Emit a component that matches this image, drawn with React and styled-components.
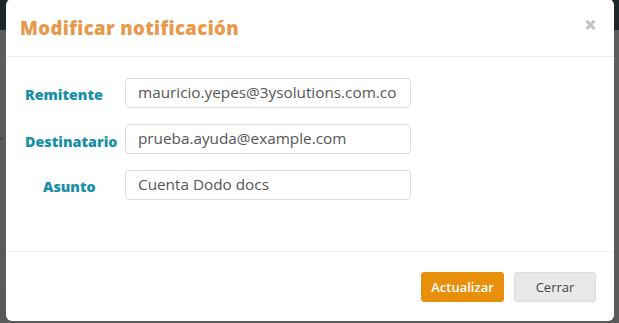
import React from "react";
import styled, { createGlobalStyle } from "styled-components";

const Global = createGlobalStyle`
  html, body { margin: 0; padding: 0; }
  body { font-family: "Open Sans", "Noto Sans", sans-serif; background: #5c5c5c; }
  * { box-sizing: border-box; }
`;

const Backdrop = styled.div`
  position: relative;
  width: 619px;
  height: 323px;
  overflow: hidden;
  background: linear-gradient(to bottom, #1c2629 0, #1c2629 30px, #5d5d5d 30px, #5a5a5a 100%);
`;

const BackText = styled.span`
  position: absolute;
  left: -4px;
  top: 130px;
  font-size: 15px;
  color: #2a2a2a;
`;

const Modal = styled.div`
  position: absolute;
  left: 6px;
  top: -1px;
  width: 608px;
  height: 322px;
  background: #fff;
  border-radius: 6px;
  display: flex;
  flex-direction: column;
`;

const Header = styled.div`
  height: 58px;
  border-bottom: 1px solid #e9ecef;
  display: flex;
  align-items: center;
  justify-content: space-between;
  padding: 0 17px 0 14px;
`;

const Title = styled.h4`
  margin: 0;
  font-size: 18.5px;
  font-weight: 800;
  color: #e8994b;
  letter-spacing: 0.4px;
`;

const Close = styled.span`
  font-size: 22px;
  font-weight: 800;
  color: #c2c2c2;
  line-height: 1;
  margin-top: -8px;
`;

const Body = styled.div`
  flex: 1;
  padding: 21px 0 0 19px;
  display: flex;
  flex-direction: column;
  gap: 16px;
`;

const Row = styled.div`
  display: flex;
  align-items: center;
`;

const Label = styled.label`
  width: 100px;
  padding-left: ${p => p.$indent || 0}px;
  font-size: 14.3px;
  font-weight: 800;
  color: #1a8fa8;
  margin-top: ${p => p.$drop || 0}px;
`;

const Input = styled.input`
  width: 286px;
  height: 30px;
  border: 1px solid #dadada;
  border-radius: 4px;
  padding: 0 0 2px 12px;
  font-family: inherit;
  font-size: 15.3px;
  color: #555;
  outline: none;
  background: #fff;
`;

const Footer = styled.div`
  height: 70px;
  border-top: 1px solid #eeeeee;
  display: flex;
  justify-content: flex-end;
  align-items: center;
  gap: 10px;
  padding: 0 18px 0 0;
`;

const Button = styled.button`
  height: 30px;
  padding: 0;
  width: ${p => p.$w}px;
  border-radius: 3px;
  font-family: inherit;
  font-size: 13px;
  cursor: pointer;
  border: 1px solid ${p => (p.$primary ? "#e8900c" : "#dcdcdc")};
  background: ${p => (p.$primary ? "#e8900c" : "#e9e9e9")};
  color: ${p => (p.$primary ? "#fff" : "#444")};
  font-weight: ${p => (p.$primary ? 600 : 400)};
`;

export default function App() {
  return (
    <>
      <Global />
      <Backdrop>
        <BackText>r</BackText>
        <Modal>
          <Header>
            <Title>Modificar notificación</Title>
            <Close>×</Close>
          </Header>
          <Body>
            <Row>
              <Label $drop={2}>Remitente</Label>
              <Input defaultValue="mauricio.yepes@3ysolutions.com.co" />
            </Row>
            <Row>
              <Label $drop={4}>Destinatario</Label>
              <Input defaultValue="prueba.ayuda@example.com" />
            </Row>
            <Row>
              <Label $drop={2} $indent={18}>Asunto</Label>
              <Input defaultValue="Cuenta Dodo docs" />
            </Row>
          </Body>
          <Footer>
            <Button $primary $w={83}>Actualizar</Button>
            <Button $w={82}>Cerrar</Button>
          </Footer>
        </Modal>
      </Backdrop>
    </>
  );
}
